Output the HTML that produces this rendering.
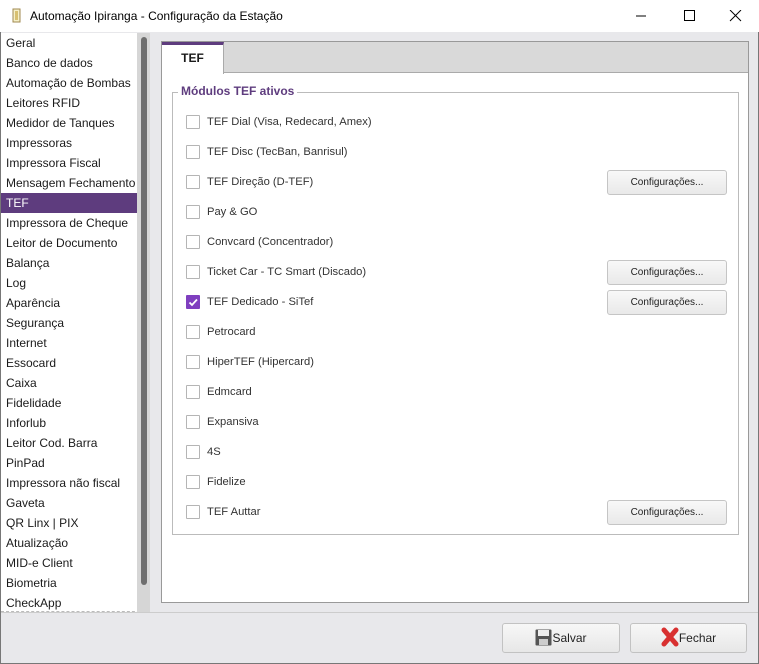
<!DOCTYPE html>
<html><head><meta charset="utf-8"><style>
*{box-sizing:border-box;margin:0;padding:0}
body{width:759px;height:664px;overflow:hidden;font-family:"Liberation Sans",sans-serif;font-size:12px;color:#1a1a1a;background:#e8e8eb;position:relative}
.win{position:absolute;inset:0;border:1px solid #777;border-top:1px solid #999}
.title{position:absolute;left:0;top:0;width:759px;height:32px;background:#fff}
.title span{position:absolute;left:30px;top:9px;font-size:12px;color:#000}
.list{position:absolute;left:1px;top:33px;width:149px;height:579px;background:#fff;border-right:1px solid #bbb;border-bottom:1px dashed #bbb;overflow:hidden}
.list div{height:20px;line-height:20px;padding-left:5px;font-size:12px;white-space:nowrap}
.list .sel{background:#5e3c7e;color:#fff;width:136px}
.track{position:absolute;left:137px;top:33px;width:13px;height:579px;background:#d6d6d6}
.thumb{position:absolute;left:141px;top:37px;width:6px;height:548px;background:#6e6e6e;border-radius:3px}
.panel{position:absolute;left:161px;top:41px;width:588px;height:562px;background:#fff;border:1px solid #999}
.strip{position:absolute;left:0;top:0;width:586px;height:31px;background:#d9d9d9;border-bottom:1px solid #aaa}
.tab{position:absolute;left:0;top:0;width:62px;height:32px;background:#fff;border-top:3px solid #5e3c7e;border-right:1px solid #aaa;font-weight:bold;font-size:12px;text-align:center;line-height:27px}
.group{position:absolute;left:10px;top:50px;width:567px;height:443px;border:1px solid #bbb}
.gt{position:absolute;left:5px;top:-9px;background:#fff;padding:0 3px;color:#5e3c7e;font-weight:bold;font-size:12px}
.row{position:absolute;left:13px;height:20px;line-height:20px}
.cb{position:absolute;left:0;top:3px;width:14px;height:14px;border:1px solid #b5b5b5;background:#fff;border-radius:1px}
.cb.on{background:#7f3fbf;border-color:#7f3fbf}
.lbl{position:absolute;left:21px;top:0;white-space:nowrap;font-size:11.2px;color:#333}
.btn{position:absolute;left:434px;width:120px;height:25px;border:1px solid #c5c5c5;border-radius:3px;background:linear-gradient(#f8f8f8,#e9e9e9);font-size:10px;text-align:center;line-height:23px;color:#222}
.sep{position:absolute;left:1px;top:612px;width:757px;height:1px;background:#ccc}
.bb{position:absolute;top:623px;height:30px;border:1px solid #c2c2c2;border-radius:3px;background:linear-gradient(#f7f7f7,#e7e7e7);font-size:12px;line-height:28px;text-align:center;color:#222}
</style></head><body>
<div class="win"></div>
<div class="title">
<svg style="position:absolute;left:11px;top:8px" width="12" height="16"><rect x="2" y="1" width="7" height="13" fill="#f5efc8" stroke="#a08a50"/><rect x="4" y="3" width="3" height="9" fill="#d8c070"/></svg>
<span>Automação Ipiranga - Configuração da Estação</span>
<svg style="position:absolute;left:636px;top:10px" width="110" height="12"><line x1="0" y1="6" x2="10" y2="6" stroke="#000"/><rect x="48.5" y="0.5" width="10" height="10" fill="none" stroke="#000"/><line x1="94" y1="0" x2="105" y2="11" stroke="#000"/><line x1="105" y1="0" x2="94" y2="11" stroke="#000"/></svg>
</div>
<div class="list">
<div>Geral</div><div>Banco de dados</div><div>Automação de Bombas</div><div>Leitores RFID</div><div>Medidor de Tanques</div><div>Impressoras</div><div>Impressora Fiscal</div><div>Mensagem Fechamento</div><div class="sel">TEF</div><div>Impressora de Cheque</div><div>Leitor de Documento</div><div>Balança</div><div>Log</div><div>Aparência</div><div>Segurança</div><div>Internet</div><div>Essocard</div><div>Caixa</div><div>Fidelidade</div><div>Inforlub</div><div>Leitor Cod. Barra</div><div>PinPad</div><div>Impressora não fiscal</div><div>Gaveta</div><div>QR Linx | PIX</div><div>Atualização</div><div>MID-e Client</div><div>Biometria</div><div>CheckApp</div>
</div>
<div class="track"></div><div class="thumb"></div>
<div class="panel">
<div class="strip"></div><div class="tab">TEF</div>
<div class="group"><div class="gt">Módulos TEF ativos</div>
<div class="row" style="top:19px"><div class="cb"></div><div class="lbl">TEF Dial (Visa, Redecard, Amex)</div></div>
<div class="row" style="top:49px"><div class="cb"></div><div class="lbl">TEF Disc (TecBan, Banrisul)</div></div>
<div class="row" style="top:79px"><div class="cb"></div><div class="lbl">TEF Direção (D-TEF)</div></div>
<div class="row" style="top:109px"><div class="cb"></div><div class="lbl">Pay &amp; GO</div></div>
<div class="row" style="top:139px"><div class="cb"></div><div class="lbl">Convcard (Concentrador)</div></div>
<div class="row" style="top:169px"><div class="cb"></div><div class="lbl">Ticket Car - TC Smart (Discado)</div></div>
<div class="row" style="top:199px"><div class="cb on"><svg width="12" height="12" style="position:absolute;left:0;top:0"><path d="M2.5 6.5 L5 9 L10 3.5" stroke="#fff" stroke-width="1.8" fill="none"/></svg></div><div class="lbl">TEF Dedicado - SiTef</div></div>
<div class="row" style="top:229px"><div class="cb"></div><div class="lbl">Petrocard</div></div>
<div class="row" style="top:259px"><div class="cb"></div><div class="lbl">HiperTEF (Hipercard)</div></div>
<div class="row" style="top:289px"><div class="cb"></div><div class="lbl">Edmcard</div></div>
<div class="row" style="top:319px"><div class="cb"></div><div class="lbl">Expansiva</div></div>
<div class="row" style="top:349px"><div class="cb"></div><div class="lbl">4S</div></div>
<div class="row" style="top:379px"><div class="cb"></div><div class="lbl">Fidelize</div></div>
<div class="row" style="top:409px"><div class="cb"></div><div class="lbl">TEF Auttar</div></div>
<div class="btn" style="top:77px">Configurações...</div>
<div class="btn" style="top:167px">Configurações...</div>
<div class="btn" style="top:197px">Configurações...</div>
<div class="btn" style="top:407px">Configurações...</div>
</div>
</div>
<div class="sep"></div>
<div class="bb" style="left:502px;width:118px"><svg width="17" height="17" style="vertical-align:-4px"><rect x="0.5" y="0.5" width="16" height="16" rx="1" fill="#555"/><rect x="3" y="1" width="11" height="6" fill="#eee"/><rect x="4" y="10" width="9" height="6" fill="#ccc"/></svg>Salvar</div>
<div class="bb" style="left:630px;width:117px"><svg width="18" height="20" style="vertical-align:-5px"><path d="M3 3 L15 17 M15 3 L3 17" stroke="#d83030" stroke-width="5" stroke-linecap="round"/></svg>Fechar</div>
</body></html>
